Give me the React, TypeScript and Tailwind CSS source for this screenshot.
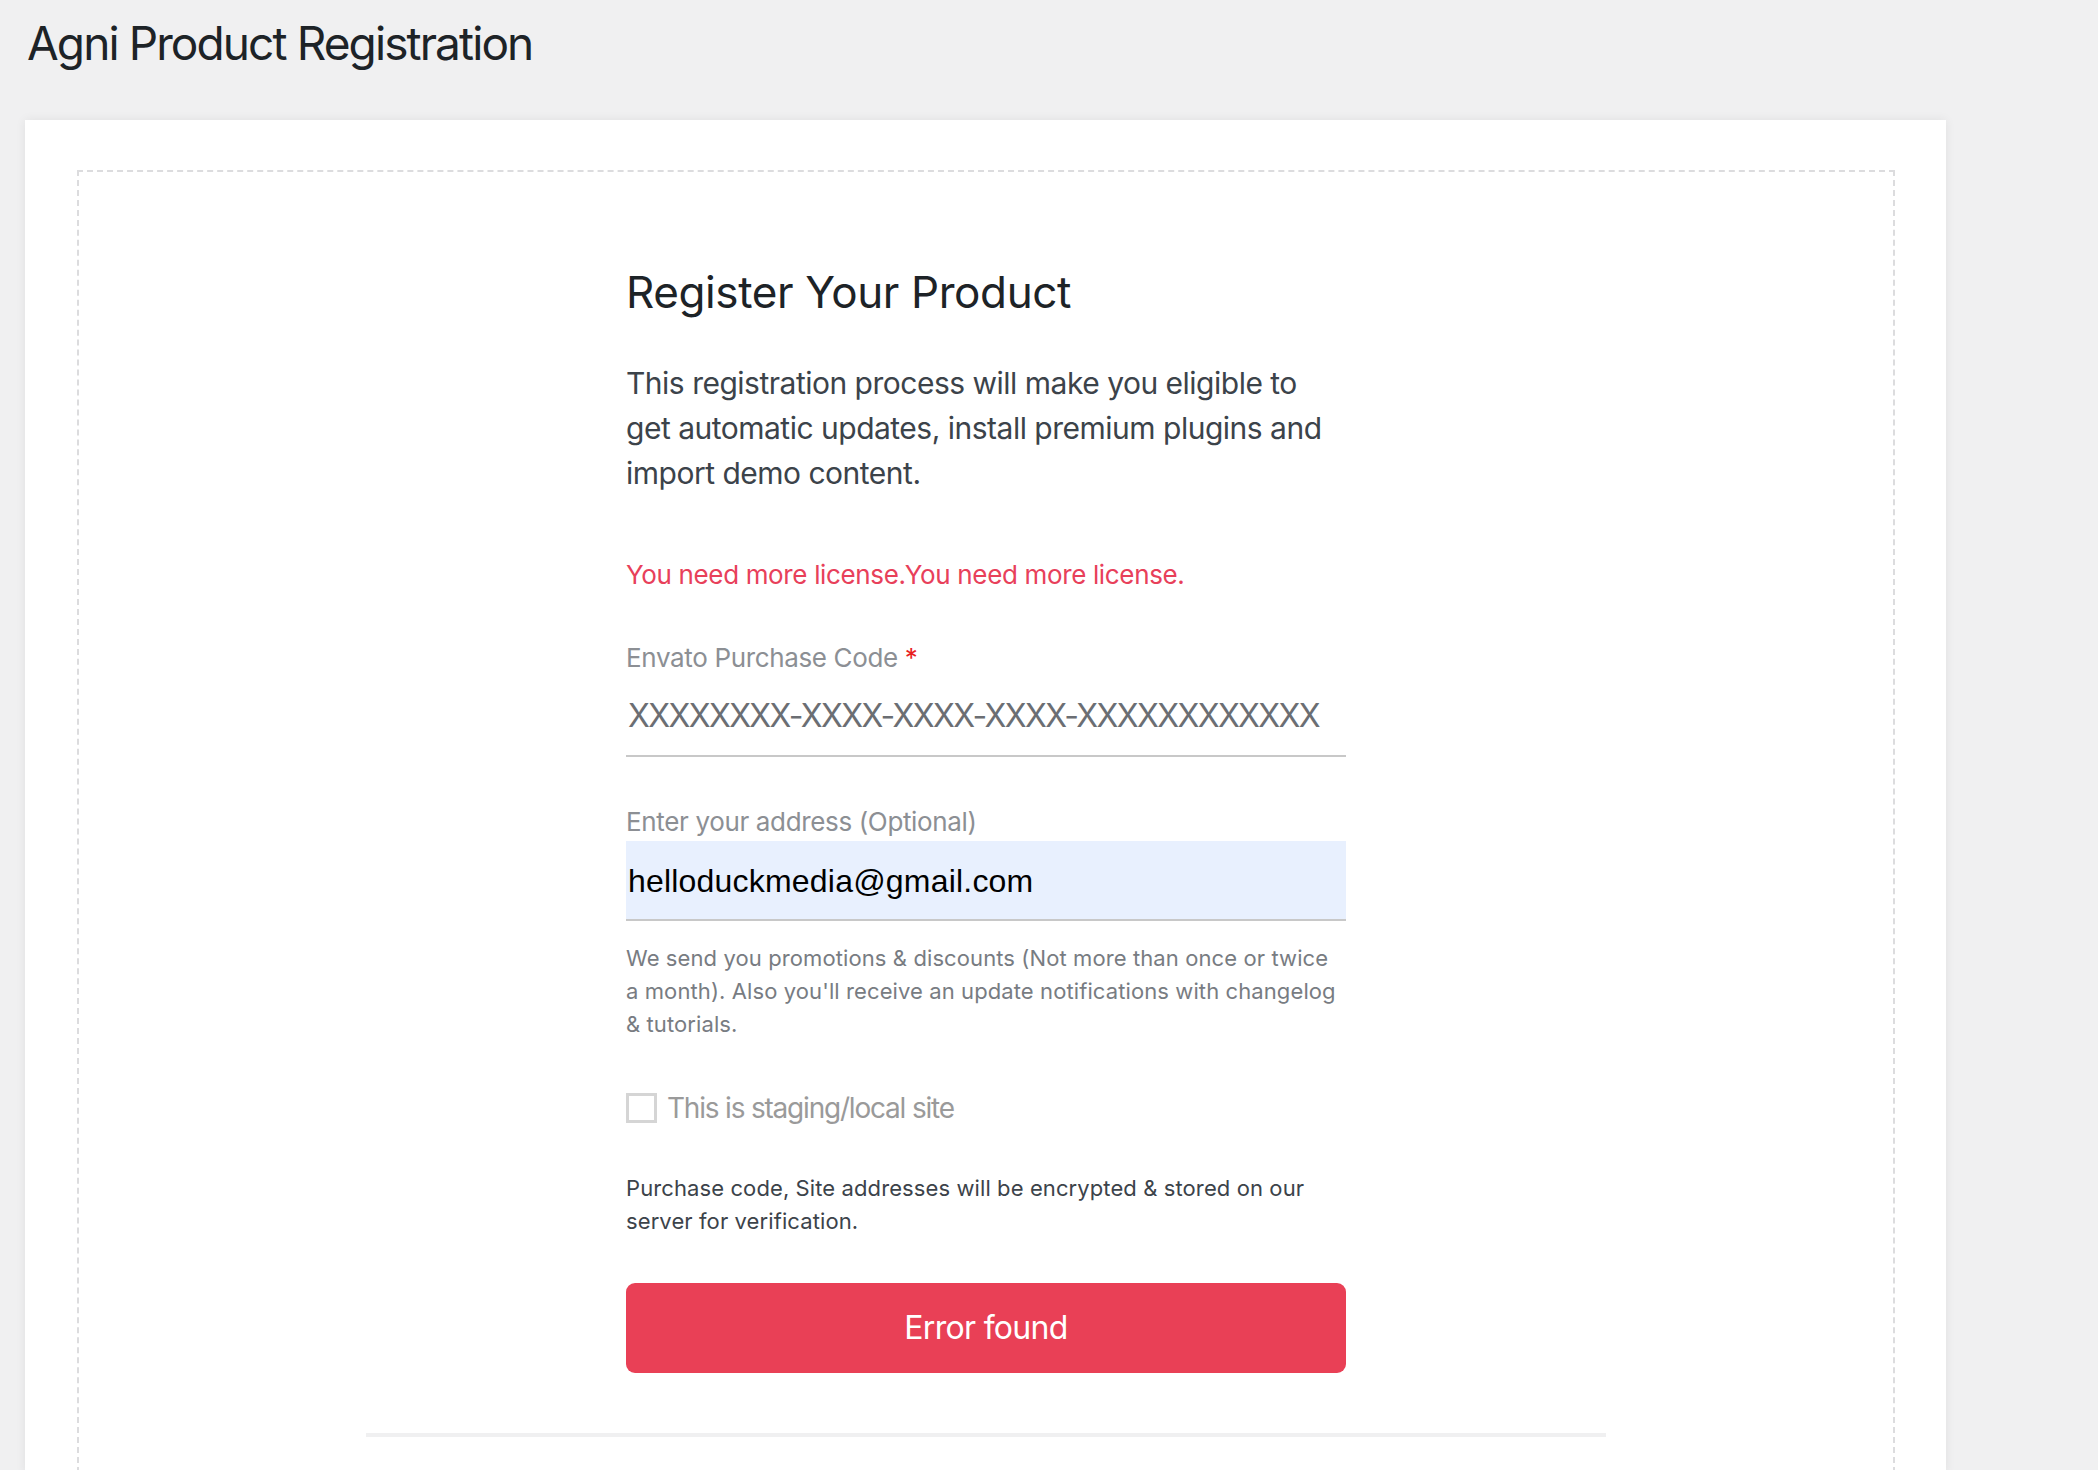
import React from "react";

const font = { fontFamily: "Inter, 'Noto Sans', sans-serif" };

export default function App() {
  return (
    <div
      className="min-h-screen bg-[#f0f0f1] pb-10"
      style={font}
    >
      <h1 className="pl-[27px] pt-[13px] text-[46px] leading-[60px] font-normal text-[#1d2327] tracking-[-1.9px]">
        Agni Product Registration
      </h1>

      <div className="ml-[25px] mt-[47px] w-[1921px] bg-white pt-[50px] pl-[52px] pr-[51px] shadow-[0_0_10px_rgba(0,0,0,0.07)]">
        <div className="border-2 border-dashed border-[#dcdcde] border-b-0 pb-[36px]">
          <div className="mx-auto w-[720px] pt-[94px]">
            <h2 className="text-[44px] leading-[53px] font-normal text-[#1d2327] tracking-[-0.4px]">
              Register Your Product
            </h2>

            <p className="mt-[42px] text-[30px] leading-[45px] text-[#3c434a] tracking-[-0.5px]">
              This registration process will make you eligible to
              <br />
              get automatic updates, install premium plugins and
              <br />
              import demo content.
            </p>

            <p className="mt-[59px] text-[26px] leading-[39px] text-[#e8405a] tracking-[-0.35px]">
              You need more license.You need more license.
            </p>

            <label className="mt-[44px] block text-[26px] leading-[39px] text-[#8c8f94] tracking-[-0.35px]">
              Envato Purchase Code <span className="text-[#e81e1e]">*</span>
            </label>
            <div className="flex h-[80px] items-center overflow-hidden border-b-2 border-[#c8c8c8] pl-[2px]">
              <span className="whitespace-nowrap text-[32px] text-[#6b6e73] tracking-[-1.6px]">
                XXXXXXXX-XXXX-XXXX-XXXX-XXXXXXXXXXXX
              </span>
            </div>

            <label className="mt-[45px] block text-[26px] leading-[39px] text-[#8c8f94] tracking-[-0.35px]">
              Enter your address (Optional)
            </label>
            <div className="flex h-[80px] items-center border-b-2 border-[#c8c8c8] bg-[#e8f0fe] pl-[2px] pt-[2px]">
              <span
                className="text-[32px] text-black tracking-[0.2px]"
                style={{ fontFamily: "'Liberation Sans', Arial, sans-serif" }}
              >
                helloduckmedia@gmail.com
              </span>
            </div>

            <p className="mt-[21px] text-[22px] leading-[33px] text-[#787c82] tracking-[0.1px]">
              We send you promotions &amp; discounts (Not more than once or twice
              <br />
              a month). Also you'll receive an update notifications with changelog
              <br />
              &amp; tutorials.
            </p>

            <div className="mt-[52px] flex items-center gap-[10px]">
              <span className="block h-[30px] w-[31px] border-[3px] border-[#d5d5d5] bg-white" />
              <span className="text-[28px] leading-[30px] text-[#9a9a9a] tracking-[-1.2px]">
                This is staging/local site
              </span>
            </div>

            <p className="mt-[49px] text-[22px] leading-[33px] text-[#3c434a] tracking-[0.1px]">
              Purchase code, Site addresses will be encrypted &amp; stored on our
              <br />
              server for verification.
            </p>

            <button className="mt-[45px] flex h-[90px] w-[720px] items-center justify-center rounded-[9px] bg-[#e94056] text-[32px] text-white tracking-[-0.7px]">
              Error found
            </button>
          </div>

          <div className="mx-auto mt-[60px] h-[4px] w-[1240px] bg-[#f0f0f1]" />
        </div>
      </div>
    </div>
  );
}
